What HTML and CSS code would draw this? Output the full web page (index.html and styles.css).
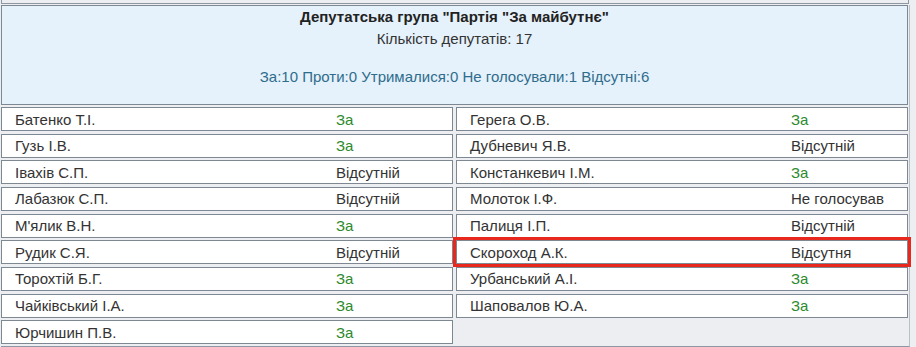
FILE: index.html
```html
<!DOCTYPE html>
<html lang="uk">
<head>
<meta charset="utf-8">
<link rel="stylesheet" href="styles.css">
</head>
<body>
<div class="prev"></div>
<div class="panel">
  <div class="head">
    <div class="title">Депутатська група "Партія "За майбутнє"</div>
    <div class="count">Кількість депутатів: 17</div>
    <div class="stats">За:10 Проти:0 Утрималися:0 Не голосували:1 Відсутні:6</div>
  </div>
  <div class="cols">
    <div class="col">
      <div class="row"><span class="name">Батенко Т.І.</span><span class="vote yes">За</span></div>
      <div class="row"><span class="name">Гузь І.В.</span><span class="vote yes">За</span></div>
      <div class="row"><span class="name">Івахів С.П.</span><span class="vote">Відсутній</span></div>
      <div class="row"><span class="name">Лабазюк С.П.</span><span class="vote">Відсутній</span></div>
      <div class="row"><span class="name">М'ялик В.Н.</span><span class="vote yes">За</span></div>
      <div class="row"><span class="name">Рудик С.Я.</span><span class="vote">Відсутній</span></div>
      <div class="row"><span class="name">Торохтій Б.Г.</span><span class="vote yes">За</span></div>
      <div class="row"><span class="name">Чайківський І.А.</span><span class="vote yes">За</span></div>
      <div class="row"><span class="name">Юрчишин П.В.</span><span class="vote yes">За</span></div>
    </div>
    <div class="col">
      <div class="row"><span class="name">Герега О.В.</span><span class="vote yes">За</span></div>
      <div class="row"><span class="name">Дубневич Я.В.</span><span class="vote">Відсутній</span></div>
      <div class="row"><span class="name">Констанкевич І.М.</span><span class="vote yes">За</span></div>
      <div class="row"><span class="name">Молоток І.Ф.</span><span class="vote">Не голосував</span></div>
      <div class="row"><span class="name">Палиця І.П.</span><span class="vote">Відсутній</span></div>
      <div class="row marked"><span class="name">Скороход А.К.</span><span class="vote">Відсутня</span></div>
      <div class="row"><span class="name">Урбанський А.І.</span><span class="vote yes">За</span></div>
      <div class="row"><span class="name">Шаповалов Ю.А.</span><span class="vote yes">За</span></div>
    </div>
  </div>
</div>
</body>
</html>
```
FILE: styles.css
```css
html, body {
  margin: 0;
  padding: 0;
  background: #eceef2;
}
body {
  width: 916px;
  height: 347px;
  overflow: hidden;
  font-family: "Liberation Sans", Arial, sans-serif;
  font-size: 15px;
  color: #333;
}
.prev {
  height: 3px;
  margin: 0 7px 0 1px;
  border-bottom: 1px solid #8e98a3;
  border-left: 1px solid #8e98a3;
  border-right: 1px solid #8e98a3;
}
.panel {
  margin: 1px 6px 0 1px;
  border-right: 1px solid #b9c0c8;
  height: 341px;
  border-bottom: 1px solid #8e98a3;
}
.head {
  box-sizing: border-box;
  height: 100px;
  margin-right: 1px;
  background: #e5f1fb;
  border: 1px solid #7d8893;
  text-align: center;
  padding-top: 0;
}
.title {
  font-weight: bold;
  line-height: 22px;
  color: #222;
}
.count {
  line-height: 22px;
  color: #333;
}
.stats {
  margin-top: 16px;
  line-height: 22px;
  color: #2f6d8c;
}
.cols {
  display: grid;
  grid-template-columns: 452px 452px;
  column-gap: 3px;
  margin-top: 2px;
}
.col {
  display: flex;
  flex-direction: column;
  gap: 2.67px;
}
.row {
  box-sizing: border-box;
  height: 24px;
  background: #fff;
  border: 1px solid #7d8893;
  display: flex;
  align-items: center;
}
.name {
  width: 321px;
  padding-left: 13px;
  flex: none;
}
.vote {
  color: #333;
}
.vote.yes {
  color: #2d8a2d;
}
.marked {
  outline: 3px solid #e8271d;
  outline-offset: 0px;
}
```
